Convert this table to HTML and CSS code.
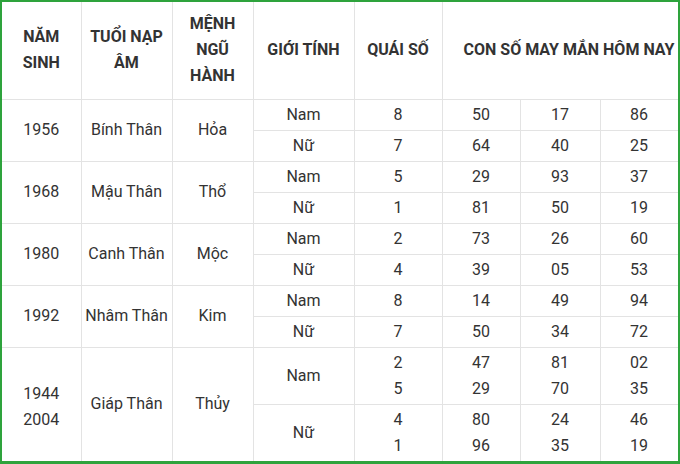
FILE: index.html
```html
<!DOCTYPE html>
<html lang="vi">
<head>
<meta charset="utf-8">
<link rel="stylesheet" href="styles.css">
</head>
<body>
<div class="frame">
<table class="tbl">
<colgroup>
<col class="c1"><col class="c2"><col class="c3"><col class="c4"><col class="c5"><col class="c6"><col class="c7"><col class="c8">
</colgroup>
<thead>
<tr class="head">
<th>NĂM<br>SINH</th>
<th>TUỔI NẠP<br>ÂM</th>
<th>MỆNH<br>NGŨ<br>HÀNH</th>
<th>GIỚI TÍNH</th>
<th>QUÁI SỐ</th>
<th colspan="3" class="lucky">CON SỐ MAY MẮN HÔM NAY</th>
</tr>
</thead>
<tbody>
<tr class="r"><td rowspan="2">1956</td><td rowspan="2">Bính Thân</td><td rowspan="2">Hỏa</td><td>Nam</td><td>8</td><td>50</td><td>17</td><td>86</td></tr>
<tr class="r"><td>Nữ</td><td>7</td><td>64</td><td>40</td><td>25</td></tr>
<tr class="r"><td rowspan="2">1968</td><td rowspan="2">Mậu Thân</td><td rowspan="2">Thổ</td><td>Nam</td><td>5</td><td>29</td><td>93</td><td>37</td></tr>
<tr class="r"><td>Nữ</td><td>1</td><td>81</td><td>50</td><td>19</td></tr>
<tr class="r"><td rowspan="2">1980</td><td rowspan="2">Canh Thân</td><td rowspan="2">Mộc</td><td>Nam</td><td>2</td><td>73</td><td>26</td><td>60</td></tr>
<tr class="r"><td>Nữ</td><td>4</td><td>39</td><td>05</td><td>53</td></tr>
<tr class="r"><td rowspan="2">1992</td><td rowspan="2">Nhâm Thân</td><td rowspan="2">Kim</td><td>Nam</td><td>8</td><td>14</td><td>49</td><td>94</td></tr>
<tr class="r"><td>Nữ</td><td>7</td><td>50</td><td>34</td><td>72</td></tr>
<tr class="rt"><td rowspan="2" class="years">1944<br>2004</td><td rowspan="2">Giáp Thân</td><td rowspan="2">Thủy</td><td>Nam</td><td>2<br>5</td><td>47<br>29</td><td>81<br>70</td><td>02<br>35</td></tr>
<tr class="rt"><td>Nữ</td><td>4<br>1</td><td>80<br>96</td><td>24<br>35</td><td>46<br>19</td></tr>
</tbody>
</table>
</div>
</body>
</html>
```
FILE: styles.css
```css
html, body {
  margin: 0;
  padding: 0;
  background: #ffffff;
}
.frame {
  width: 680px;
  height: 464px;
  box-sizing: border-box;
  border: 2px solid #2ea33c;
  border-bottom-width: 3px;
  overflow: hidden;
}
.tbl {
  width: 676px;
  table-layout: fixed;
  border-collapse: collapse;
  font-family: Roboto, "Liberation Sans", sans-serif;
  font-size: 16px;
  line-height: 26px;
  color: #333333;
}
.c1 { width: 79px; }
.c2 { width: 91px; }
.c3 { width: 81px; }
.c4 { width: 101px; }
.c5 { width: 88px; }
.c6 { width: 78px; }
.c7 { width: 80px; }
.c8 { width: 78px; }
.tbl th, .tbl td {
  border: 1px solid #e3e3e3;
  padding: 0 2px;
  text-align: center;
  vertical-align: middle;
}
.tbl th {
  font-weight: 700;
  color: #333333;
}
.tbl th.lucky {
  padding-left: 18px;
  padding-right: 0;
}
.tbl td.years {
  padding-top: 5px;
}
.tbl tr:first-child th { border-top: none; }
.tbl th:first-child, .tbl td:first-child { border-left: none; }
.tbl tbody tr:last-child td { border-bottom: none; }
.head { height: 97px; }
.r { height: 31px; }
.rt { height: 57px; }
```
